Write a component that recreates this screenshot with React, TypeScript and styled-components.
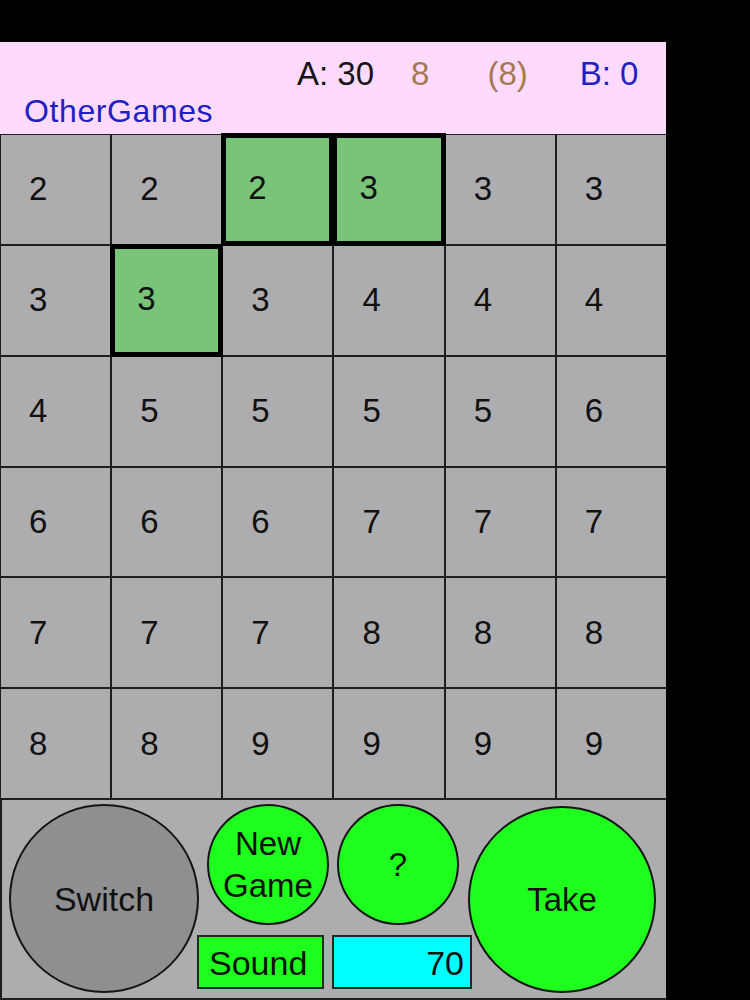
import React from "react";
import styled, { createGlobalStyle, css } from "styled-components";

const Global = createGlobalStyle`
  html, body {
    margin: 0;
    padding: 0;
    background: #000;
  }
  body {
    font-family: "Liberation Sans", Arial, sans-serif;
  }
`;

const Screen = styled.div`
  width: 750px;
  height: 1000px;
  background: #000;
  padding-top: 42px;
  box-sizing: border-box;
`;

const Board = styled.div`
  width: 666px;
  display: flex;
  flex-direction: column;
`;

const Header = styled.header`
  height: 92px;
  background: #ffdaff;
  display: flex;
  flex-direction: column;
  box-sizing: border-box;
  padding: 13px 0 0 0;
`;

const ScoreRow = styled.div`
  display: flex;
  align-items: baseline;
  height: 38px;
  font-size: 33px;
  line-height: 38px;
`;

const Score = styled.span<{ $color: string; $ml: number }>`
  color: ${(p) => p.$color};
  margin-left: ${(p) => p.$ml}px;
  white-space: pre;
`;

const LinkRow = styled.div`
  padding-left: 24px;
  font-size: 32px;
  line-height: 36px;
  color: #1f1fc4;
  letter-spacing: 0.6px;
`;

const Grid = styled.div`
  height: 664px;
  display: grid;
  grid-template-columns: repeat(6, 1fr);
  grid-template-rows: repeat(6, 1fr);
  gap: 2px;
  background: #1e1e1e;
  border-top: 1px solid #1e1e1e;
  border-left: 1px solid #1e1e1e;
  box-sizing: border-box;
`;

const Cell = styled.div<{ $sel?: boolean }>`
  background: #adacae;
  display: flex;
  align-items: center;
  padding-left: 28px;
  font-size: 33px;
  color: #111;
  position: relative;
  ${(p) =>
    p.$sel &&
    css`
      background: #78c478;
      padding-left: 25px;
      padding-bottom: 3px;
      z-index: 1;
      box-shadow: 0 0 0 2px #000, inset 0 0 0 3px #000;
    `}
`;

const Panel = styled.div`
  height: 202px;
  background: #adadaf;
  border-top: 2px solid #1e1e1e;
  border-left: 2px solid #1e1e1e;
  border-bottom: 2px solid #1e1e1e;
  box-sizing: border-box;
  display: flex;
  padding: 4px 0 0 7px;
`;

const Round = styled.div<{ $w: number; $h: number; $bg: string; $ml?: number; $mt?: number; $fs?: number }>`
  width: ${(p) => p.$w}px;
  height: ${(p) => p.$h}px;
  margin-left: ${(p) => p.$ml ?? 0}px;
  margin-top: ${(p) => p.$mt ?? 0}px;
  flex: none;
  border-radius: 50%;
  background: ${(p) => p.$bg};
  border: 2px solid #151515;
  box-sizing: border-box;
  display: flex;
  align-items: center;
  justify-content: center;
  text-align: center;
  font-size: ${(p) => p.$fs ?? 33}px;
  line-height: 42px;
  color: #111;
`;

const Middle = styled.div`
  width: 275px;
  margin-left: -2px;
  display: flex;
  flex-direction: column;
  flex: none;
`;

const CircleRow = styled.div`
  display: flex;
  gap: 8px;
  padding-left: 10px;
`;

const BoxRow = styled.div`
  display: flex;
  gap: 8px;
  margin-top: 10px;
`;

const Box = styled.div<{ $w: number; $bg: string; $right?: boolean }>`
  width: ${(p) => p.$w}px;
  height: 54px;
  background: ${(p) => p.$bg};
  border: 2px solid #1d2a1d;
  box-sizing: border-box;
  display: flex;
  align-items: center;
  justify-content: ${(p) => (p.$right ? "flex-end" : "flex-start")};
  padding: 2px 6px 0 10px;
  font-size: 34px;
  color: #111;
`;

const values = [
  [2, 2, 2, 3, 3, 3],
  [3, 3, 3, 4, 4, 4],
  [4, 5, 5, 5, 5, 6],
  [6, 6, 6, 7, 7, 7],
  [7, 7, 7, 8, 8, 8],
  [8, 8, 9, 9, 9, 9],
];

const selected = new Set(["0-2", "0-3", "1-1"]);

const GREEN = "#1eff1e";

export default function App() {
  return (
    <>
      <Global />
      <Screen>
        <Board>
          <Header>
            <ScoreRow>
              <Score $color="#151515" $ml={297}>A: 30</Score>
              <Score $color="#a37a52" $ml={37}>8</Score>
              <Score $color="#a37a52" $ml={58}>(8)</Score>
              <Score $color="#1f1fc4" $ml={52}>B: 0</Score>
            </ScoreRow>
            <LinkRow>OtherGames</LinkRow>
          </Header>
          <Grid>
            {values.map((row, r) =>
              row.map((v, c) => (
                <Cell key={`${r}-${c}`} $sel={selected.has(`${r}-${c}`)}>
                  {v}
                </Cell>
              ))
            )}
          </Grid>
          <Panel>
            <Round $w={190} $h={189} $bg="#8f8e91" $fs={34}>Switch</Round>
            <Middle>
              <CircleRow>
                <Round $w={122} $h={121} $bg={GREEN}>
                  New
                  <br />
                  Game
                </Round>
                <Round $w={122} $h={121} $bg={GREEN}>
                  ?
                </Round>
              </CircleRow>
              <BoxRow>
                <Box $w={127} $bg={GREEN}>Sound</Box>
                <Box $w={140} $bg="#00ffff" $right>
                  70
                </Box>
              </BoxRow>
            </Middle>
            <Round $w={188} $h={187} $bg={GREEN} $ml={-4} $mt={2}>
              Take
            </Round>
          </Panel>
        </Board>
      </Screen>
    </>
  );
}
